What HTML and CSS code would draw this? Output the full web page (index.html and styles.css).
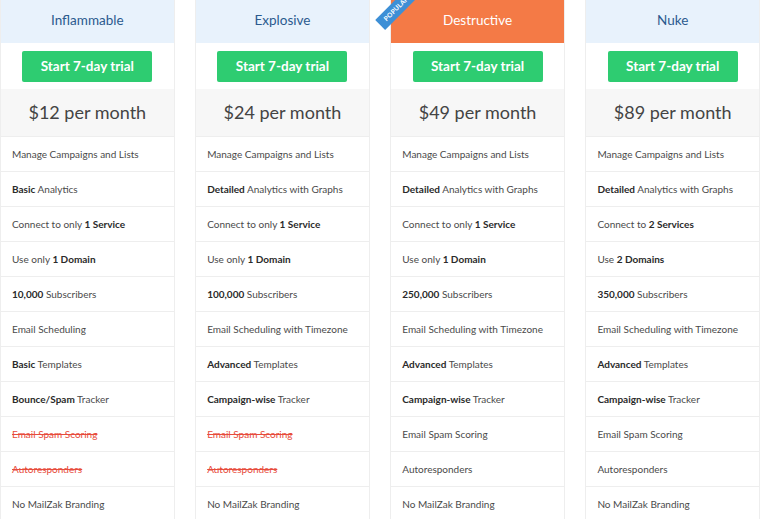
FILE: index.html
```html
<!DOCTYPE html>
<html lang="en">
<head>
<meta charset="utf-8">
<title>Pricing</title>
<link rel="stylesheet" href="styles.css">
</head>
<body>
<div class="pricing">
  <div class="plan">
    <div class="plan-head">Inflammable</div>
    <div class="plan-cta"><a class="btn" href="#">Start 7-day trial</a></div>
    <div class="plan-price">$12 per month</div>
    <ul class="features">
      <li>Manage Campaigns and Lists</li>
      <li><b>Basic</b> Analytics</li>
      <li>Connect to only <b>1 Service</b></li>
      <li>Use only <b>1 Domain</b></li>
      <li><b>10,000</b> Subscribers</li>
      <li>Email Scheduling</li>
      <li><b>Basic</b> Templates</li>
      <li><b>Bounce/Spam</b> Tracker</li>
      <li class="off">Email Spam Scoring</li>
      <li class="off">Autoresponders</li>
      <li>No MailZak Branding</li>
    </ul>
  </div>
  <div class="plan">
    <div class="plan-head">Explosive</div>
    <div class="plan-cta"><a class="btn" href="#">Start 7-day trial</a></div>
    <div class="plan-price">$24 per month</div>
    <ul class="features">
      <li>Manage Campaigns and Lists</li>
      <li><b>Detailed</b> Analytics with Graphs</li>
      <li>Connect to only <b>1 Service</b></li>
      <li>Use only <b>1 Domain</b></li>
      <li><b>100,000</b> Subscribers</li>
      <li>Email Scheduling with Timezone</li>
      <li><b>Advanced</b> Templates</li>
      <li><b>Campaign-wise</b> Tracker</li>
      <li class="off">Email Spam Scoring</li>
      <li class="off">Autoresponders</li>
      <li>No MailZak Branding</li>
    </ul>
  </div>
  <div class="plan plan-popular">
    <div class="ribbon">Popular</div>
    <div class="plan-head">Destructive</div>
    <div class="plan-cta"><a class="btn" href="#">Start 7-day trial</a></div>
    <div class="plan-price">$49 per month</div>
    <ul class="features">
      <li>Manage Campaigns and Lists</li>
      <li><b>Detailed</b> Analytics with Graphs</li>
      <li>Connect to only <b>1 Service</b></li>
      <li>Use only <b>1 Domain</b></li>
      <li><b>250,000</b> Subscribers</li>
      <li>Email Scheduling with Timezone</li>
      <li><b>Advanced</b> Templates</li>
      <li><b>Campaign-wise</b> Tracker</li>
      <li>Email Spam Scoring</li>
      <li>Autoresponders</li>
      <li>No MailZak Branding</li>
    </ul>
  </div>
  <div class="plan">
    <div class="plan-head">Nuke</div>
    <div class="plan-cta"><a class="btn" href="#">Start 7-day trial</a></div>
    <div class="plan-price">$89 per month</div>
    <ul class="features">
      <li>Manage Campaigns and Lists</li>
      <li><b>Detailed</b> Analytics with Graphs</li>
      <li>Connect to <b>2 Services</b></li>
      <li>Use <b>2 Domains</b></li>
      <li><b>350,000</b> Subscribers</li>
      <li>Email Scheduling with Timezone</li>
      <li><b>Advanced</b> Templates</li>
      <li><b>Campaign-wise</b> Tracker</li>
      <li>Email Spam Scoring</li>
      <li>Autoresponders</li>
      <li>No MailZak Branding</li>
    </ul>
  </div>
</div>
</body>
</html>
```
FILE: styles.css
```css
html, body {
  margin: 0;
  padding: 0;
  height: 519px;
  overflow: hidden;
  background: #fff;
}
body {
  font-family: "Lato", "Open Sans", sans-serif;
  color: #444;
}
.pricing {
  display: grid;
  grid-template-columns: repeat(4, 1fr);
  column-gap: 20.5px;
  width: 760px;
}
.plan {
  position: relative;
  border-left: 1px solid #eee;
  border-right: 1px solid #eee;
  background: #fff;
}
.plan-head {
  height: 43px;
  line-height: 41px;
  text-align: center;
  background: #e8f2fc;
  color: #2b5a8e;
  font-size: 13.5px;
}
.plan-popular .plan-head {
  background: #f47a46;
  color: #fff;
}
.plan-cta {
  height: 46px;
  display: flex;
  justify-content: center;
  padding-top: 8px;
  box-sizing: border-box;
}
.btn {
  display: block;
  width: 130px;
  height: 31px;
  line-height: 31px;
  text-align: center;
  background: #2ecc71;
  border-radius: 2px;
  color: #fff;
  font-weight: bold;
  font-size: 13.5px;
  text-decoration: none;
}
.plan-price {
  height: 47px;
  line-height: 47px;
  text-align: center;
  background: #f7f7f7;
  border-bottom: 1px solid #eee;
  font-size: 18px;
  color: #444;
}
.features {
  list-style: none;
  margin: 0;
  padding: 0;
}
.features li {
  height: 34px;
  line-height: 34px;
  border-bottom: 1px solid #eee;
  padding-left: 11px;
  font-size: 10px;
  color: #4a4a4a;
  white-space: nowrap;
}
.features b {
  color: #2a2a2a;
}
.features li.off {
  color: #e74c3c;
  text-decoration: line-through;
}
.ribbon {
  position: absolute;
  left: -11px;
  top: 18px;
  width: 70px;
  height: 13.5px;
  line-height: 13.5px;
  padding-left: 7px;
  box-sizing: border-box;
  background: #3d8fd6;
  color: #fff;
  font-size: 6.5px;
  font-weight: bold;
  letter-spacing: 0.2px;
  text-transform: uppercase;
  transform-origin: 0 50%;
  transform: rotate(-45deg);
  z-index: 2;
  white-space: nowrap;
}
```
